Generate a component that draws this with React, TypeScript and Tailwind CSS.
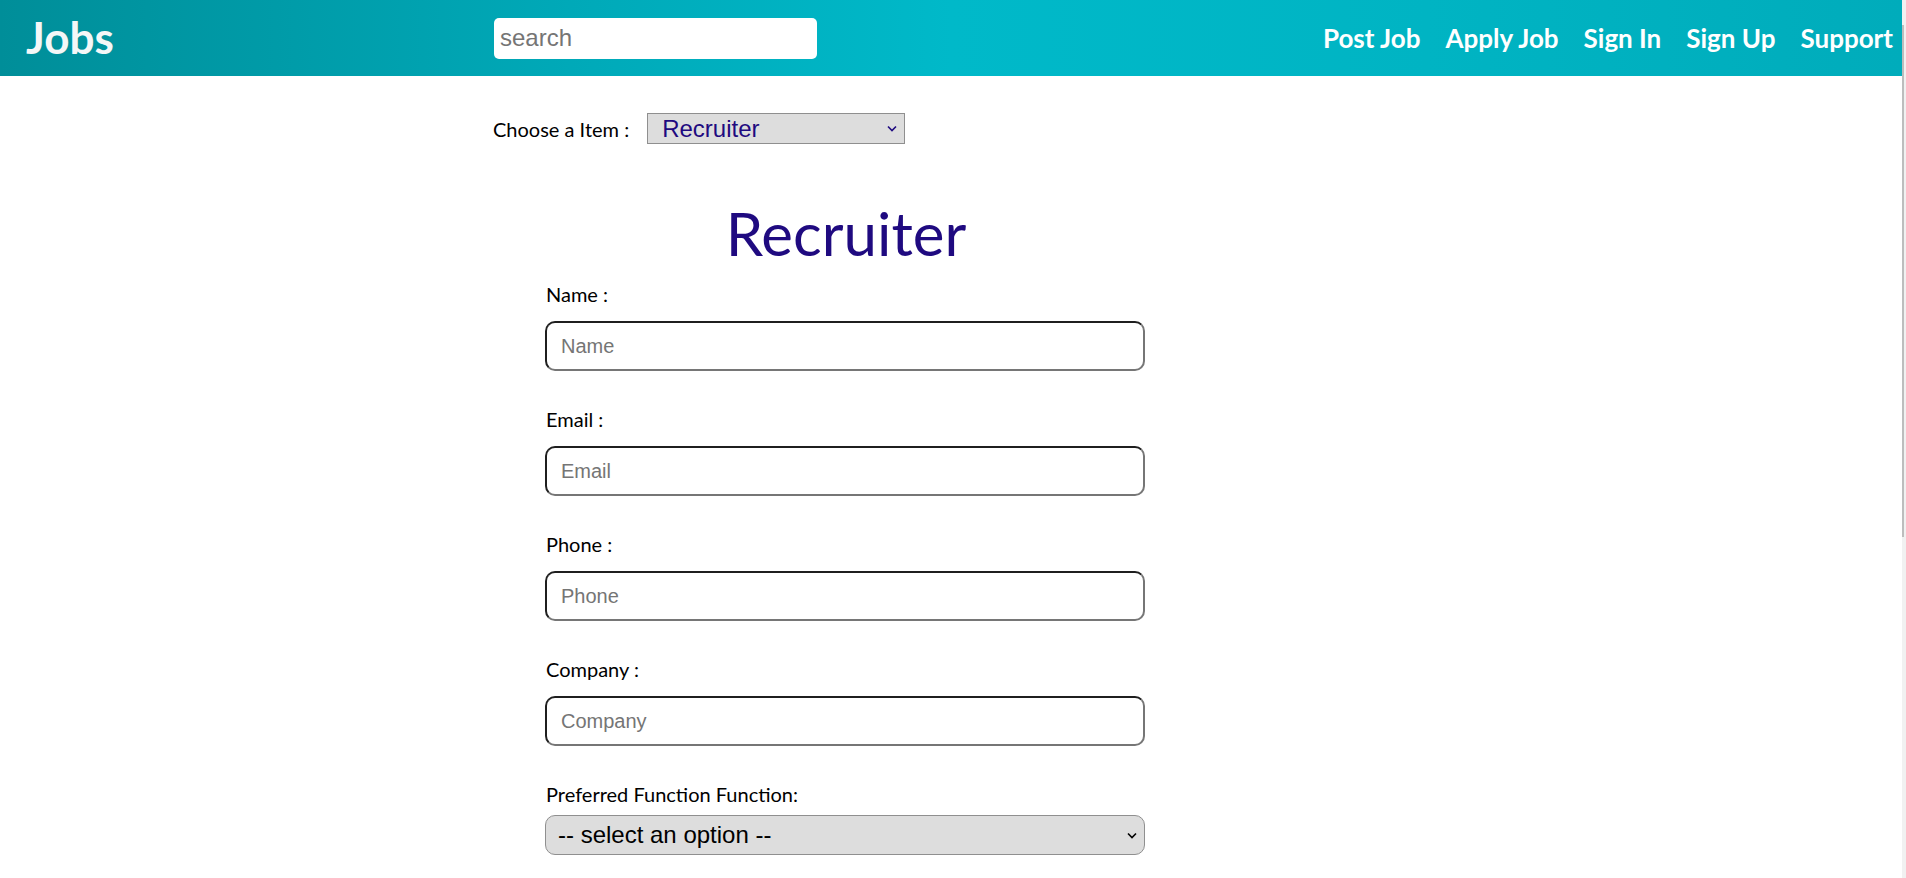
import React from "react";

function Field({ label, placeholder }: { label: string; placeholder: string }) {
  return (
    <div className="flex flex-col">
      <label className="pl-[1px] text-[20px] leading-[24px] h-[24px] text-black">{label}</label>
      <input
        placeholder={placeholder}
        className="mt-[15px] w-[600px] h-[50px] rounded-[10px] border-2 border-t-[#1f1f1f] border-l-[#1f1f1f] border-b-[#767676] border-r-[#767676] bg-white pl-[14px] pr-[10px] text-[20px] text-black placeholder:text-[#757575] outline-none font-['Liberation_Sans',Arial,sans-serif]"
      />
    </div>
  );
}

export default function App() {
  return (
    <div className="flex min-h-[1480px] bg-white font-['Lato','Open_Sans',sans-serif]">
      <div className="flex-1 min-w-0">
        <header className="h-[76px] flex items-center bg-[linear-gradient(90deg,#008e99_0%,#00a9b8_30%,#00b9c9_50%,#00b4c3_75%,#00acbb_100%)]">
          <div className="w-[494px] pl-[26px] pb-[2px]">
            <span className="text-[44px] leading-[52px] font-bold text-[#f4f7f7]">Jobs</span>
          </div>
          <input
            placeholder="search"
            className="w-[323px] h-[41px] rounded-[5px] bg-white px-[6px] text-[24px] text-black placeholder:text-[#757575] outline-none font-['Liberation_Sans',Arial,sans-serif]"
          />
          <nav className="ml-auto flex items-center gap-[25px] pr-[9px] text-[26px] font-bold text-white">
            <a>Post Job</a>
            <a>Apply Job</a>
            <a>Sign In</a>
            <a>Sign Up</a>
            <a>Support</a>
          </nav>
        </header>

        <main className="ml-[493px] w-[706px]">
          <div className="mt-[37px] flex items-center h-[31px]">
            <span className="text-[20px] text-black">Choose a Item :</span>
            <div className="relative ml-[18px]">
              <select
                defaultValue="Recruiter"
                className="appearance-none w-[258px] h-[31px] bg-[#dddddd] border border-[#8f8f8f] pl-[14px] text-[24px] leading-[27px] text-[#1f0a80] font-['Liberation_Sans',Arial,sans-serif] outline-none"
              >
                <option>Recruiter</option>
                <option>Job Seeker</option>
              </select>
              <svg className="pointer-events-none absolute right-[8px] top-[12px]" width="10" height="7" viewBox="0 0 10 7">
                <path d="M1 1.5 L5 5.5 L9 1.5" fill="none" stroke="#1f0a80" strokeWidth="1.6" />
              </svg>
            </div>
          </div>

          <h1 className="mt-[54px] h-[70px] text-center text-[60px] leading-[70px] text-[#1f0a80] font-normal">Recruiter</h1>

          <form className="ml-[52px] mt-[14px] flex flex-col gap-[36px]">
            <Field label="Name :" placeholder="Name" />
            <Field label="Email :" placeholder="Email" />
            <Field label="Phone :" placeholder="Phone" />
            <Field label="Company :" placeholder="Company" />
            <div className="flex flex-col">
              <label className="pl-[1px] text-[20px] leading-[24px] h-[24px] text-black">Preferred Function Function:</label>
              <div className="relative mt-[9px] w-[600px]">
                <select
                  defaultValue=""
                  className="appearance-none w-[600px] h-[40px] rounded-[10px] bg-[#dddddd] border border-[#8f8f8f] pl-[12px] text-[24px] text-black font-['Liberation_Sans',Arial,sans-serif] outline-none"
                >
                  <option value="" disabled>-- select an option --</option>
                  <option>Engineering</option>
                  <option>Sales</option>
                </select>
                <svg className="pointer-events-none absolute right-[8px] top-[17px]" width="10" height="7" viewBox="0 0 10 7">
                  <path d="M1 1.5 L5 5.5 L9 1.5" fill="none" stroke="#000" strokeWidth="1.6" />
                </svg>
              </div>
            </div>
          </form>
        </main>
      </div>
      <aside className="w-[4px] shrink-0 bg-[#f1f1f1]">
        <div className="sticky top-0 h-[878px] flex flex-col pt-[25px]">
          <div className="w-[2px] h-[512px] bg-[#bdbdbd]" />
        </div>
      </aside>
    </div>
  );
}
